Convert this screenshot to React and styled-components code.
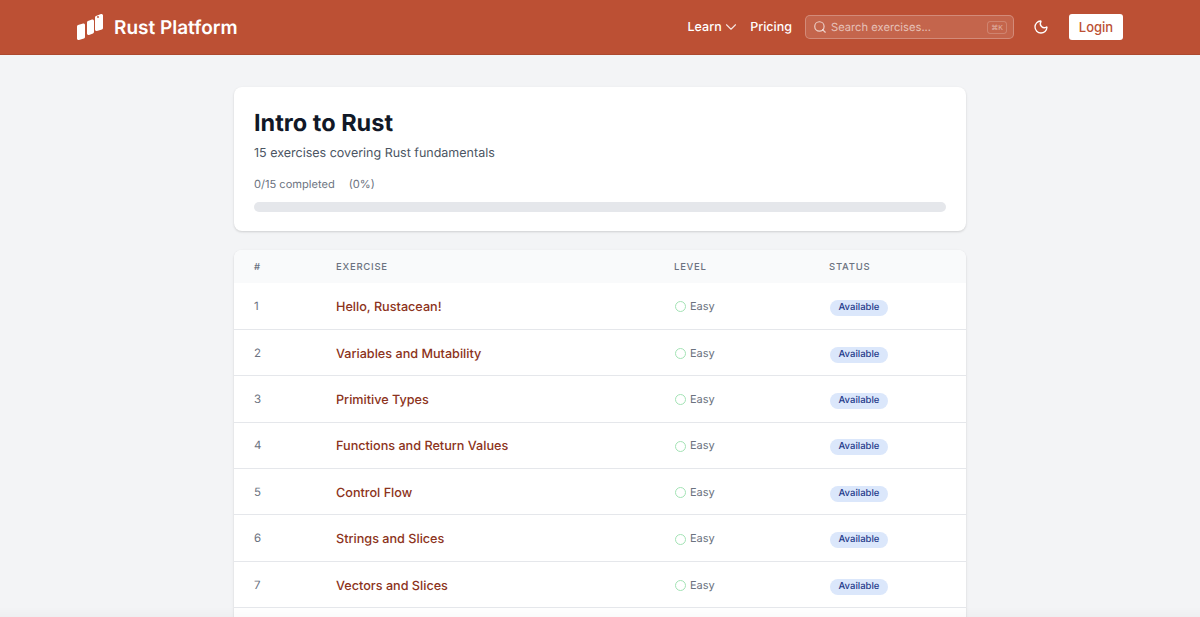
import styled, { createGlobalStyle } from "styled-components";
import { ChevronDown, Search, Moon } from "lucide-react";

const exercises = [
  "Hello, Rustacean!",
  "Variables and Mutability",
  "Primitive Types",
  "Functions and Return Values",
  "Control Flow",
  "Strings and Slices",
  "Vectors and Slices",
];

export default function App() {
  return (
    <Page>
      <GlobalStyle />
      <Navbar>
        <Brand>
          <svg width="28" height="28" viewBox="0 0 28 28" fill="#fff" stroke="#fff" strokeWidth="3" strokeLinejoin="round">
            <polygon points="2.500,13.500 7.500,12 7.500,24 2.500,25.500" />
            <polygon points="12.500,9.500 16.500,8 16.500,19 12.500,20.500" />
            <polygon points="20.500,4.500 25.500,2.500 25.500,15 20.500,16.500" />
            <circle cx="22" cy="4" r="0.900" fill="#bc5034" stroke="none" />
          </svg>
          <BrandName>Rust Platform</BrandName>
        </Brand>
        <NavRight>
          <LearnLink>
            Learn <ChevronDown size={18} strokeWidth={1.5} />
          </LearnLink>
          <NavLink>Pricing</NavLink>
          <SearchBox>
            <Search size={14} strokeWidth={2} />
            <SearchText>Search exercises...</SearchText>
            <Kbd>⌘K</Kbd>
          </SearchBox>
          <ThemeToggle>
            <Moon size={16} strokeWidth={2} />
          </ThemeToggle>
          <LoginButton>Login</LoginButton>
        </NavRight>
      </Navbar>
      <Main>
        <Card>
          <Title>Intro to Rust</Title>
          <Subtitle>15 exercises covering Rust fundamentals</Subtitle>
          <ProgressLabel>
            <span>0/15 completed</span>
            <span>(0%)</span>
          </ProgressLabel>
          <ProgressTrack />
        </Card>
        <TableCard>
          <Table>
            <colgroup>
              <col width="82" />
              <col width="338" />
              <col width="155" />
              <col />
            </colgroup>
            <thead>
              <tr>
                <Th>#</Th>
                <Th>Exercise</Th>
                <Th>Level</Th>
                <Th>Status</Th>
              </tr>
            </thead>
            <tbody>
              {exercises.map((name, i) => (
                <Row key={name}>
                  <NumCell>{i + 1}</NumCell>
                  <Td>
                    <ExerciseLink>{name}</ExerciseLink>
                  </Td>
                  <Td>
                    <Level>
                      <LevelDot />
                      Easy
                    </Level>
                  </Td>
                  <Td>
                    <Badge>Available</Badge>
                  </Td>
                </Row>
              ))}
            </tbody>
          </Table>
        </TableCard>
      </Main>
      <BottomFade />
    </Page>
  );
}

const GlobalStyle = createGlobalStyle`
  html, body {
    margin: 0;
    padding: 0;
    background: #f3f4f6;
    overflow: hidden;
  }
  body {
    font-family: Inter, "Liberation Sans", sans-serif;
    text-rendering: geometricPrecision;
  }
`;

const Page = styled.div`
  height: 617px;
  overflow: hidden;
`;

const BottomFade = styled.div`
  position: fixed;
  left: 0;
  right: 0;
  bottom: 0;
  height: 10px;
  background: linear-gradient(rgba(0, 0, 0, 0), rgba(0, 0, 0, 0.02));
  pointer-events: none;
`;

const Navbar = styled.header`
  display: flex;
  justify-content: space-between;
  align-items: center;
  height: 55px;
  padding: 0 77px 1px 76px;
  box-sizing: border-box;
  background: #bc5034;
  box-shadow: inset 0 -1px 0 rgba(0, 0, 0, 0.08);
`;

const Brand = styled.div`
  display: flex;
  align-items: center;
  gap: 10px;
`;

const BrandName = styled.span`
  font-size: 19px;
  font-weight: 600;
  color: #fff;
`;

const NavRight = styled.nav`
  display: flex;
  align-items: center;
`;

const NavLink = styled.a`
  display: flex;
  align-items: center;
  margin-right: 13px;
  font-size: 12.500px;
  font-weight: 500;
  color: #fff;
`;

const LearnLink = styled(NavLink)`
  margin-right: 10.500px;

  svg {
    opacity: 0.85;
  }
`;

const SearchBox = styled.div`
  display: flex;
  align-items: center;
  box-sizing: border-box;
  width: 209px;
  height: 24px;
  padding: 0 6px 0 7px;
  border: 1px solid rgba(255, 255, 255, 0.25);
  border-radius: 5px;
  background: rgba(255, 255, 255, 0.12);
  color: rgba(255, 255, 255, 0.7);

  svg {
    flex: none;
  }
`;

const SearchText = styled.span`
  flex: 1;
  margin-left: 4px;
  font-size: 11.200px;
  color: rgba(255, 255, 255, 0.6);
`;

const Kbd = styled.span`
  padding: 1px 3px;
  border: 1px solid rgba(255, 255, 255, 0.2);
  border-radius: 3px;
  font-size: 7px;
  line-height: 9px;
  color: rgba(255, 255, 255, 0.5);
`;

const ThemeToggle = styled.button`
  display: flex;
  margin: 0 20px 0 19px;
  padding: 0;
  border: none;
  background: none;
  color: #fff;
`;

const LoginButton = styled.button`
  width: 54px;
  height: 26px;
  padding: 0;
  border: none;
  border-radius: 3px;
  background: #fff;
  font-family: inherit;
  font-size: 13px;
  font-weight: 500;
  color: #bc5034;
`;

const Main = styled.main`
  display: flex;
  flex-direction: column;
  gap: 19px;
  width: 732px;
  margin: 32px auto 0;
`;

const Card = styled.section`
  box-sizing: border-box;
  height: 144px;
  padding: 20px;
  background: #fff;
  border-radius: 8px;
  box-shadow: 0 1px 3px rgba(0, 0, 0, 0.1), 0 1px 2px rgba(0, 0, 0, 0.06);
`;

const Title = styled.h1`
  margin: 0;
  padding-top: 1px;
  font-size: 23.500px;
  font-weight: 700;
  line-height: 30px;
  color: #111827;
`;

const Subtitle = styled.p`
  margin: 7px 0 0;
  font-size: 12.500px;
  line-height: 18px;
  color: #4b5563;
`;

const ProgressLabel = styled.div`
  display: flex;
  gap: 14px;
  margin-top: 13px;
  font-size: 11.100px;
  line-height: 16px;
  color: #6b7280;
`;

const ProgressTrack = styled.div`
  height: 10px;
  margin-top: 10px;
  border-radius: 5px;
  background: #e5e7eb;
`;

const TableCard = styled.section`
  padding-bottom: 40px;
  background: #fff;
  border-radius: 8px;
  overflow: hidden;
  box-shadow: 0 1px 3px rgba(0, 0, 0, 0.1), 0 1px 2px rgba(0, 0, 0, 0.06);
`;

const Table = styled.table`
  width: 100%;
  border-collapse: collapse;
  table-layout: fixed;
`;

const Th = styled.th`
  height: 33px;
  padding: 1px 20px 0;
  box-sizing: border-box;
  background: #f9fafb;
  text-align: left;
  font-size: 9.500px;
  font-weight: 500;
  letter-spacing: 0.08em;
  text-transform: uppercase;
  color: #6b7280;
`;

const Row = styled.tr`
  height: 46.400px;
  border-bottom: 1px solid #e5e7eb;
`;

const Td = styled.td`
  padding: 0 20px;
`;

const NumCell = styled(Td)`
  font-size: 11.500px;
  color: #6b7280;
`;

const ExerciseLink = styled.a`
  position: relative;
  top: -1px;
  font-size: 12.650px;
  font-weight: 500;
  color: #8c3320;
`;

const Level = styled.span`
  display: flex;
  align-items: center;
  gap: 4px;
  font-size: 11px;
  color: #6b7280;
`;

const LevelDot = styled.i`
  position: relative;
  top: 1px;
  box-sizing: border-box;
  width: 11px;
  height: 11px;
  margin-left: 1px;
  border: 1.500px solid #a3e3b5;
  border-radius: 50%;
`;

const Badge = styled.span`
  display: inline-block;
  position: relative;
  top: -1px;
  padding: 0 8.500px;
  margin-left: 1px;
  border-radius: 8px;
  background: #dbe7fb;
  font-size: 9.500px;
  font-weight: 500;
  line-height: 16px;
  color: #1e3a8a;
`;
